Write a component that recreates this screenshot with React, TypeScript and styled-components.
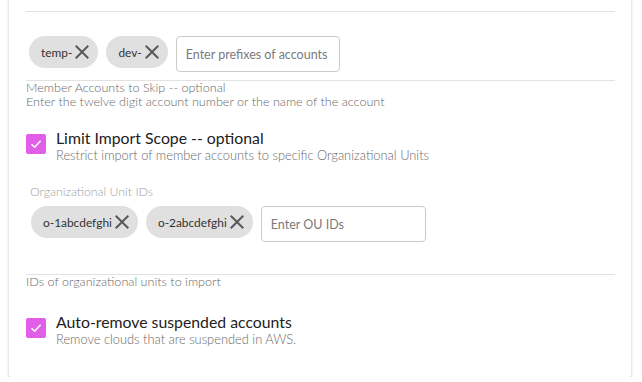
import styled, { createGlobalStyle } from "styled-components";

const GlobalStyle = createGlobalStyle`
  html, body {
    margin: 0;
    padding: 0;
    background: #ffffff;
    font-family: Lato, "Open Sans", "Liberation Sans", sans-serif;
  }
`;

const Card = styled.div`
  margin: -4px 11px 0 9px;
  padding: 4px 16px 30px 17px;
  background: #ffffff;
  border-radius: 0 0 2px 2px;
  box-shadow: 0 1px 3px rgba(0, 0, 0, 0.25), 0 1px 1px rgba(0, 0, 0, 0.08);
`;

const TopRule = styled.div`
  height: 11px;
  border-bottom: 1px solid #e2e2e2;
`;

const ChipField = styled.div<{ $top: number; $bottom: number; $chipShift: number }>`
  display: flex;
  align-items: flex-start;
  gap: 8px;
  padding: ${(p) => p.$top}px 0 ${(p) => p.$bottom}px ${(p) => p.$chipShift}px;
  border-bottom: 1px solid #e2e2e2;
`;

const Chip = styled.div`
  display: flex;
  align-items: center;
  height: 32px;
  padding: 0 4px 0 12px;
  border-radius: 16px;
  background: #e0e0e0;
  color: #333333;
  font-size: 11.9px;
`;

const ChipClose = styled.svg`
  width: 24px;
  height: 24px;
  fill: #595959;
  margin-left: -2px;
`;

const TextInput = styled.input<{ $width: number }>`
  box-sizing: border-box;
  width: ${(p) => p.$width}px;
  height: 36px;
  border: 1px solid #cccccc;
  border-radius: 4px;
  padding: 0 9px;
  font-family: inherit;
  font-size: 12.5px;
  color: #333333;
  outline: none;

  &::placeholder {
    color: #7a7a7a;
  }
`;

const Helper = styled.div`
  font-size: 12.6px;
  line-height: 14px;
  font-weight: 300;
  color: #6a6a6a;
`;

const OptionRow = styled.div<{ $top: number }>`
  display: flex;
  align-items: flex-start;
  gap: 10px;
  margin-top: ${(p) => p.$top}px;
`;

const Box = styled.div`
  flex: none;
  width: 20px;
  height: 20px;
  margin-top: 5px;
  border-radius: 2px;
  background: #e25ee9;
  display: flex;
  align-items: center;
  justify-content: center;
`;

const OptionText = styled.div`
  display: flex;
  flex-direction: column;
`;

const OptionTitle = styled.div`
  font-size: 15.8px;
  line-height: 18px;
  color: #222222;
`;

const OptionSub = styled.div`
  font-size: 12.85px;
  line-height: 16px;
  font-weight: 300;
  color: #6a6a6a;
`;

const FieldLabel = styled.div`
  margin: 22px 0 0 4px;
  font-size: 12.3px;
  line-height: 14px;
  font-weight: 300;
  color: #a0a0a0;
`;

const Check = () => (
  <svg width="14" height="14" viewBox="0 0 14 14">
    <path d="M2.5 7.2 L5.6 10.2 L11.6 3.8" fill="none" stroke="#ffffff" strokeWidth="1.6" />
  </svg>
);

const ChipItem = ({ label }: { label: string }) => (
  <Chip>
    {label}
    <ChipClose viewBox="0 0 24 24">
      <path d="M19 6.41L17.59 5 12 10.59 6.41 5 5 6.41 10.59 12 5 17.59 6.41 19 12 13.41 17.59 19 19 17.59 13.41 12z" />
    </ChipClose>
  </Chip>
);

const App: React.FC = () => {
  return (
    <>
      <GlobalStyle />
      <Card>
        <TopRule />
        <ChipField $top={24} $bottom={8} $chipShift={3}>
          <ChipItem label="temp-" />
          <ChipItem label="dev-" />
          <TextInput $width={164} placeholder="Enter prefixes of accounts" />
        </ChipField>
        <Helper>
          Member Accounts to Skip -- optional
          <br />
          Enter the twelve digit account number or the name of the account
        </Helper>

        <OptionRow $top={20}>
          <Box>
            <Check />
          </Box>
          <OptionText>
            <OptionTitle>Limit Import Scope -- optional</OptionTitle>
            <OptionSub>Restrict import of member accounts to specific Organizational Units</OptionSub>
          </OptionText>
        </OptionRow>

        <FieldLabel>Organizational Unit IDs</FieldLabel>
        <ChipField $top={7} $bottom={32} $chipShift={5}>
          <ChipItem label="o-1abcdefghi" />
          <ChipItem label="o-2abcdefghi" />
          <TextInput $width={165} placeholder="Enter OU IDs" />
        </ChipField>
        <Helper>IDs of organizational units to import</Helper>

        <OptionRow $top={24}>
          <Box>
            <Check />
          </Box>
          <OptionText>
            <OptionTitle>Auto-remove suspended accounts</OptionTitle>
            <OptionSub>Remove clouds that are suspended in AWS.</OptionSub>
          </OptionText>
        </OptionRow>
      </Card>
    </>
  );
};

export default App;
